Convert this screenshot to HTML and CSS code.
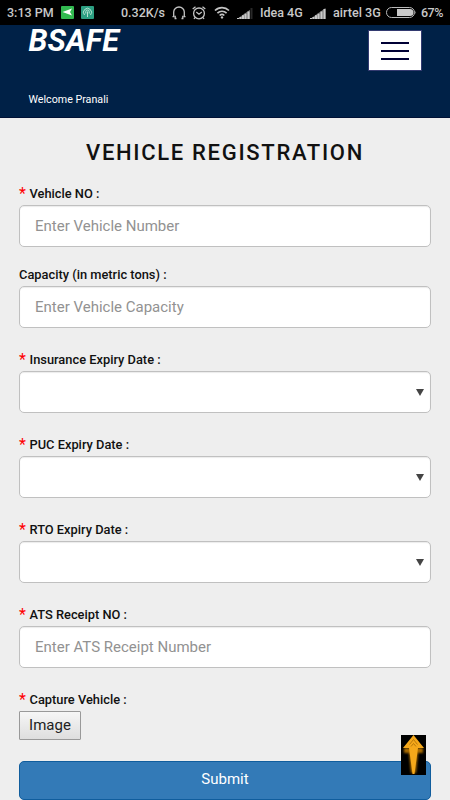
FILE: index.html
```
<!DOCTYPE html>
<html lang="en">

<head>
    <meta charset="UTF-8">
    <meta name="viewport" content="width=device-width, initial-scale=1.0">
    <title>BSAFE - Vehicle Registration</title>
    <link rel="stylesheet" href="styles.css">
</head>

<body>
    <!-- Phone Status Bar -->
    <div class="status-bar">
        <span class="status-time">3:13 PM</span>
        <svg class="status-app" width="13" height="13" viewBox="0 0 13 13">
            <rect width="13" height="13" rx="1" fill="#32b950"/>
            <path d="M1.5 6 11 2.5 9 6 11 9.5z" fill="#fff"/>
        </svg>
        <svg class="status-app2" width="13" height="13" viewBox="0 0 13 13">
            <rect width="13" height="13" rx="1" fill="#2c9f82"/>
            <path d="M3.5 9a4 4 0 1 1 6 0M4.8 7.5V5.7a1.7 1.7 0 0 1 3.4 0V7.5M6.5 5.5V11" fill="none" stroke="#c5ead9" stroke-width=".9"/>
        </svg>
        <span class="status-speed">0.32K/s</span>
        <svg class="status-headset" width="14" height="14" viewBox="0 0 14 14" fill="none" stroke="#c4c4c4" stroke-width="1.3">
            <path d="M4.5 12.5H3.2V9.8M.5 10.7H1.7V6a5.3 5 0 0 1 10.6 0V10.7H13.5M10.8 9.8V12.5H9.5"/>
        </svg>
        <svg class="status-alarm" width="14" height="14" viewBox="0 0 14 14" fill="none" stroke="#c4c4c4" stroke-width="1.3">
            <circle cx="7" cy="7.4" r="5.4"/>
            <path d="M.7 3 3.5.8M13.3 3 10.5.8M4.3 6 7 8.2 9.8 6M3 11.5 2 13M11 11.5l1 1.5"/>
        </svg>
        <svg class="status-wifi" width="16" height="13" viewBox="0 0 16 13" fill="none" stroke="#c4c4c4" stroke-width="1.7">
            <path d="M1 4.5a10 10 0 0 1 14 0M3.4 7.1a6.6 6.6 0 0 1 9.2 0M5.7 9.5a3.3 3.3 0 0 1 4.6 0"/>
            <circle cx="8" cy="11.4" r="1.2" fill="#c4c4c4" stroke="none"/>
        </svg>
        <svg class="status-signal" width="16" height="11" viewBox="0 0 16 11">
            <path d="M0 11 13 1.8V11z" fill="#707070"/>
            <path d="M0 10h2v1H0zM2.5 9h2v2h-2zM5 7.3h2V11H5zM7.5 5.7h2V11h-2zM10.5 3.5h2V11h-2z" fill="#c9c9c9"/>
            <path d="M13.5 0H15.5v11h-2z" fill="#292929"/>
        </svg>
        <span class="status-idea">Idea 4G</span>
        <svg class="status-signal2" width="16" height="11" viewBox="0 0 16 11">
            <path d="M0 11 15.5 0V11z" fill="#707070"/>
            <path d="M0 10h2v1H0zM2.5 9h2v2h-2zM5 7.3h2V11H5zM7.5 5.7h2V11h-2zM10.5 3.5h2V11h-2zM13.5 1h2v10h-2z" fill="#c9c9c9"/>
        </svg>
        <span class="status-airtel">airtel 3G</span>
        <svg class="status-battery" width="31" height="12" viewBox="0 0 31 12">
            <rect x=".5" y=".5" width="28" height="10" rx="5" fill="none" stroke="#b9b9b9"/>
            <path d="M11 2h13a3.5 3.5 0 0 1 0 7H11zM29.5 4q1.2 1.5 0 3z" fill="#c9c9c9"/>
        </svg>
        <span class="status-percent">67%</span>
    </div>

    <!-- Header -->
    <header class="header">
        <div class="brand">
            <div class="logo">BSAFE</div>
            <div class="welcome">Welcome Pranali</div>
        </div>
        <button class="menu-btn" aria-label="Menu">
            <span class="bar"></span>
            <span class="bar"></span>
            <span class="bar"></span>
        </button>
    </header>

    <!-- Registration Form -->
    <main class="content">
        <h1 class="title">VEHICLE REGISTRATION</h1>
        <form class="form">
            <div class="form-group first">
                <label class="label" for="vehicle-no"><span class="required">*</span>Vehicle NO :</label>
                <input class="field" type="text" id="vehicle-no" placeholder="Enter Vehicle Number">
            </div>
            <div class="form-group">
                <label class="label" for="capacity">Capacity (in metric tons) :</label>
                <input class="field" type="text" id="capacity" placeholder="Enter Vehicle Capacity">
            </div>
            <div class="form-group">
                <div class="label"><span class="required">*</span>Insurance Expiry Date :</div>
                <div class="field date"><span class="arrow"></span></div>
            </div>
            <div class="form-group">
                <div class="label"><span class="required">*</span>PUC Expiry Date :</div>
                <div class="field date"><span class="arrow"></span></div>
            </div>
            <div class="form-group">
                <div class="label"><span class="required">*</span>RTO Expiry Date :</div>
                <div class="field date"><span class="arrow"></span></div>
            </div>
            <div class="form-group">
                <label class="label" for="ats-no"><span class="required">*</span>ATS Receipt NO :</label>
                <input class="field" type="text" id="ats-no" placeholder="Enter ATS Receipt Number">
            </div>
            <div class="form-group capture">
                <div class="label"><span class="required">*</span>Capture Vehicle :</div>
                <button class="image-btn" type="button">Image</button>
            </div>
            <button class="submit-btn" type="button">Submit</button>
        </form>
    </main>

    <!-- Back To Top -->
    <a class="to-top" href="#" aria-label="Back to top">
        <svg width="25" height="40" viewBox="0 0 25 40">
            <defs>
                <filter id="glow" x="-50%" y="-50%" width="200%" height="200%">
                    <feGaussianBlur stdDeviation="1.2"/>
                </filter>
            </defs>
            <rect width="25" height="40" fill="#000"/>
            <path d="M3 13h19v5h-5l-2 20h-5L8 18H3z" fill="#a96a00" filter="url(#glow)"/>
            <path d="M12.5 0 23 13H17L13.5 39h-2L8 13H2z" fill="#f5a81a"/>
            <path d="M8.5 9.5l4-5 4 5M10 11.5l2.5-3 2.5 3" fill="none" stroke="#a86c08" stroke-width=".8"/>
        </svg>
    </a>
</body>

</html>
```

FILE: styles.css
```
/* General Reset and Styling */
* {
    margin: 0;
    padding: 0;
    box-sizing: border-box;
    font-family: Roboto, sans-serif;
}

body {
    height: 800px;
    background-color: #eee;
    overflow: hidden;
}

/* Status Bar */
.status-bar {
    height: 25px;
    display: flex;
    align-items: center;
    background-color: #000;
    color: #c9c9c9;
    font-size: 12.5px;
    font-weight: 500;
    white-space: nowrap;
}

.status-bar svg {
    flex-shrink: 0;
}

.status-bar span {
    flex-shrink: 0;
    line-height: 25px;
}

.status-time {
    width: 53px;
    padding-left: 7px;
}

.status-app {
    margin-left: 8px;
}

.status-app2 {
    margin-left: 7px;
}

.status-speed {
    width: 51px;
    margin-left: 27px;
}

.status-alarm {
    margin-left: 6px;
}

.status-wifi {
    margin-left: 8px;
}

.status-signal {
    margin: 2px 0 0 7px;
}

.status-idea {
    width: 50px;
    margin-left: 7px;
}

.status-signal2 {
    margin-top: 2px;
}

.status-airtel {
    width: 53px;
    margin-left: 7px;
    font-size: 12.6px;
}

.status-percent {
    margin-left: 4px;
    letter-spacing: -0.5px;
}

/* Header */
.header {
    height: 93px;
    display: flex;
    justify-content: space-between;
    align-items: flex-start;
    padding: 0 28px;
    background-color: #002147;
    border-bottom: 1px solid #001135;
    color: #fff;
}

.brand {
    padding-left: 0.5px;
}

.logo {
    height: 30px;
    line-height: 32px;
    font-size: 30.7px;
    font-weight: bold;
    font-style: italic;
}

.welcome {
    margin-top: 37px;
    line-height: 16px;
    font-size: 10.7px;
}

.menu-btn {
    width: 54px;
    height: 41px;
    margin-top: 5px;
    display: flex;
    flex-direction: column;
    justify-content: center;
    align-items: center;
    gap: 6px;
    background-color: #fff;
    border: 1px solid #333a70;
}

.bar {
    width: 28px;
    height: 2px;
    background-color: #000035;
}

/* Form */
.content {
    padding: 0 19px;
}

.title {
    height: 63px;
    padding-top: 20px;
    line-height: 30px;
    text-align: center;
    font-size: 22px;
    font-weight: 500;
    letter-spacing: 1.68px;
    color: #111;
}

.form-group {
    margin-bottom: 19px;
}

.form-group.first {
    margin-bottom: 15px;
}

.label {
    height: 24px;
    display: flex;
    line-height: 26px;
    font-size: 12.85px;
    font-weight: 500;
    color: #111;
}

.required {
    width: 10.5px;
    font-size: 16px;
    font-weight: normal;
    color: #f00;
}

.field {
    width: 100%;
    height: 42px;
    display: block;
    padding: 0 15px;
    background-color: #fff;
    border: 1px solid #c0c0c0;
    border-radius: 5px;
    box-shadow: inset 0 1px 1px rgba(0, 0, 0, 0.08);
    font-size: 15px;
    outline: none;
}

.field::placeholder {
    color: #929292;
}

.date {
    display: flex;
    justify-content: flex-end;
    align-items: center;
    padding: 0 6px;
}

.arrow {
    border-left: 4px solid transparent;
    border-right: 4px solid transparent;
    border-top: 7px solid #444;
}

/* Buttons */
.form-group.capture {
    margin-bottom: 21px;
}

.image-btn {
    width: 62px;
    height: 29px;
    display: block;
    padding-bottom: 2px;
    background: linear-gradient(#f6f6f6, #dedede);
    border: 1px solid #999;
    border-radius: 1px;
    font-size: 15px;
    color: #222;
}

.submit-btn {
    width: 100%;
    height: 39px;
    display: block;
    padding-bottom: 3px;
    background-color: #337ab7;
    border: 1px solid #105d9d;
    border-radius: 5px;
    font-size: 15px;
    color: #fff;
}

/* Back To Top */
.to-top {
    position: absolute;
    left: 401px;
    top: 735px;
    width: 25px;
    height: 40px;
}

.to-top svg {
    display: block;
}
```
